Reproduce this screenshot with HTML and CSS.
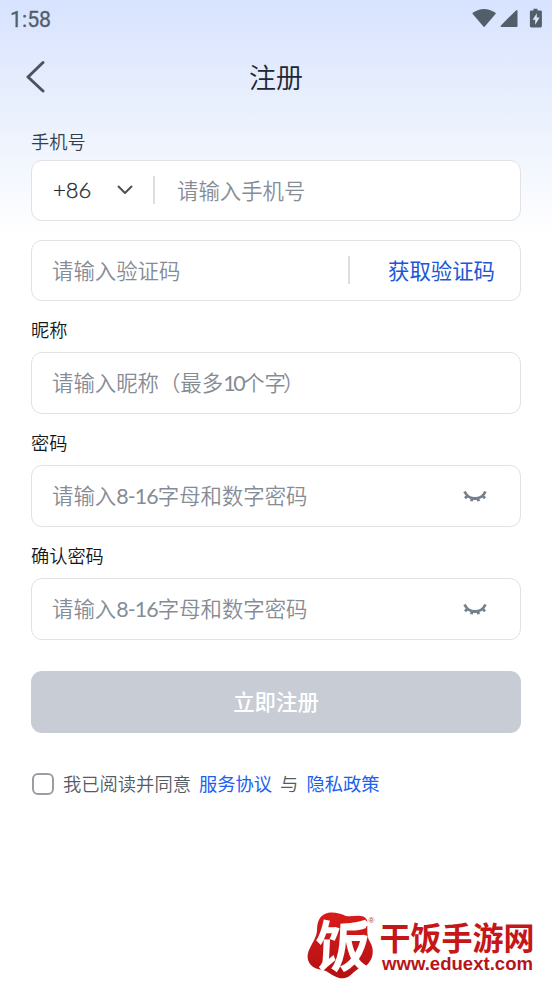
FILE: index.html
```html
<!DOCTYPE html>
<html lang="zh-CN">
<head>
<meta charset="utf-8">
<title>注册</title>
<link rel="stylesheet" href="styles.css">
</head>
<body>
<div class="screen">
  <div class="status">
    <span class="clock">1:58</span>
    <svg class="status-icons" width="72" height="22" viewBox="0 0 72 22">
      <path d="M.7 4.800Q12.100-2.800 23.500 4.800Q24 5.400 23.500 6L12.800 18.600Q12.100 19.300 11.400 18.600L.7 6Q.3 5.300.7 4.800Z"/>
      <path d="M45.500 2.800V18a1 1 0 0 1-1 1H29.400q-1.400-.4-.5-1.600L44 2.400q1.500-1 1.500.4Z"/>
      <path fill-rule="evenodd" d="M61.500.8h4v1.800h3a1.400 1.400 0 0 1 1.400 1.400v14a1.400 1.400 0 0 1-1.400 1.400h-9.200a1.400 1.400 0 0 1-1.400-1.400V4a1.400 1.400 0 0 1 1.400-1.400h2.200ZM64.800 5.200l-4.200 6.600h2.600v5l4.400-7.200h-2.800Z"/>
    </svg>
  </div>
  <header class="header">
    <svg class="back" width="20" height="34" viewBox="0 0 20 34"><path d="M17 2.500 2 17 17 31"/></svg>
    <h1 class="title">注册</h1>
  </header>
  <main class="form">
    <label class="label label-phone">手机号</label>
    <div class="field field-short">
      <span class="code">+86</span>
      <svg class="chevron" width="16" height="10" viewBox="0 0 16 10"><path d="M1.500 1.500 8 8 14.500 1.500"/></svg>
      <i class="divider divider-phone"></i>
      <span class="hint">请输入手机号</span>
    </div>
    <div class="field field-short field-sms">
      <span class="hint">请输入验证码</span>
      <i class="divider divider-sms"></i>
      <span class="send">获取验证码</span>
    </div>
    <label class="label">昵称</label>
    <div class="field"><span class="hint">请输入昵称（最多<span class="num num-tight">10</span>个字<span class="paren">）</span></span></div>
    <label class="label">密码</label>
    <div class="field">
      <span class="hint">请输入<span class="num">8-16</span>字母和数字密码</span>
      <svg class="eye" width="24" height="14" viewBox="0 0 24 14"><path d="M1.500 1.500C6 10.800 18 10.800 22.500 1.500M4.500 5.800 2 8.200M9 8.700 8.400 11.300M15 8.700 15.600 11.300M19.500 5.800 22 8.200"/></svg>
    </div>
    <label class="label">确认密码</label>
    <div class="field">
      <span class="hint">请输入<span class="num">8-16</span>字母和数字密码</span>
      <svg class="eye" width="24" height="14" viewBox="0 0 24 14"><path d="M1.500 1.500C6 10.800 18 10.800 22.500 1.500M4.500 5.800 2 8.200M9 8.700 8.400 11.300M15 8.700 15.600 11.300M19.500 5.800 22 8.200"/></svg>
    </div>
    <button class="submit">立即注册</button>
    <div class="agree">
      <i class="checkbox"></i>
      <span class="agree-text">我已阅读并同意</span>
      <a class="link">服务协议</a>
      <span>与</span>
      <a class="link">隐私政策</a>
    </div>
  </main>
  <svg class="brand" width="232" height="72" viewBox="0 0 232 72">
    <defs><linearGradient id="red" x1="0" y1="0" x2="0" y2="1"><stop offset="0" stop-color="#d91c1b"/><stop offset="1" stop-color="#b41014"/></linearGradient></defs>
    <path fill="url(#red)" d="M14 8C20 0 31 2 40 6C48 7 57 3 61 10C62 19 60 25 64 32C69 40 67 50 60 56C52 57 49 62 42 67C33 71 27 65 20 61C13 59 5 59 2 50C0 42 6 35 9 28C13 20 9 16 14 8Z"/>
    <text class="mark" transform="translate(8 57) skewX(-3)" x="0" y="0" textLength="56" lengthAdjust="spacingAndGlyphs">饭</text>
    <path fill="#fff" d="M36 15C45 18 54 15 61 11L60 18C53 21 45 21 37 20ZM49 47C55 53 61 57 72 62L59 61C52 58 48 54 45 50Z"/>
    <text class="reg" x="62.500" y="13">®</text>
    <text class="brand-name" x="73.500" y="40" textLength="155" lengthAdjust="spacingAndGlyphs">干饭手游网</text>
    <text class="brand-url" x="76" y="60" textLength="151" lengthAdjust="spacingAndGlyphs">www.eduext.com</text>
  </svg>
</div>
</body>
</html>
```
FILE: styles.css
```css
* { box-sizing: border-box; }
body { margin: 0; font-family: "Noto Sans CJK SC", sans-serif; font-weight: 350; color: #111820; }
.screen { height: 983px; overflow: hidden; display: flex; flex-direction: column; background: linear-gradient(#d7e2fe 0, #e8effd 100px, #fff 240px); }
.status { height: 38px; flex: none; display: flex; justify-content: space-between; align-items: flex-start; padding: 8px 8px 0 10px; }
.clock { font: 400 21.300px/24px Roboto, sans-serif; color: #535e6b; -webkit-text-stroke: .3px #535e6b; }
.status-icons { fill: #535e6b; }
.header { height: 78px; flex: none; display: grid; grid-template-columns: 20px 1fr 20px; align-items: center; padding: 0 26px; }
.back { fill: none; stroke: #4c535e; stroke-width: 3; stroke-linecap: round; stroke-linejoin: round; }
.title { margin: 0; text-align: center; font-size: 27px; line-height: 40px; font-weight: 350; color: #202733; }
.form { padding: 12px 31px 0; display: flex; flex-direction: column; }
.label { height: 51px; font-size: 18.200px; line-height: 27px; padding-top: 15px; }
.label-phone { height: 32px; padding-top: 0; color: #363e4b; }
.field { height: 62px; padding: 0 20px 1px; border: 1.500px solid #e2e2e5; border-radius: 11px; background: #fff; display: flex; align-items: center; font-size: 21.400px; line-height: 32px; }
.field-short { height: 61px; }
.field-sms { margin-top: 19px; }
.hint { color: #858c95; white-space: nowrap; margin-top: -1px; }
.num { font-family: Lato, sans-serif; font-weight: 400; letter-spacing: -.9px; }
.num-tight { letter-spacing: -2.400px; }
.paren { margin-left: -3px; }
.code { width: 65px; padding-left: 1px; font: 300 22px/32px Lato, sans-serif; -webkit-text-stroke: .3px #252a31; color: #252a31; }
.chevron, .eye, .checkbox { flex: none; }
.chevron { fill: none; stroke: #4b5158; stroke-width: 2; stroke-linecap: round; stroke-linejoin: round; }
.divider { width: 2px; height: 28px; background: #dedede; flex: none; }
.divider-phone { margin: 0 22px 0 20px; }
.divider-sms { margin-left: auto; }
.send { margin: -1px 5px 0 38px; color: #1c57d5; font-weight: 400; }
.eye { margin: 3px 13px 0 auto; fill: none; stroke: #74818c; stroke-width: 2.800; }
.submit { height: 62px; margin-top: 31px; border: 0; padding: 0 0 2px; border-radius: 11px; background: #c8ccd4; color: #fff; font: 500 21.400px/32px "Noto Sans CJK SC", sans-serif; }
.agree { margin-top: 36px; height: 28px; display: flex; align-items: center; font-size: 18.300px; color: #535b65; white-space: nowrap; }
.checkbox { width: 22px; height: 22px; margin: 1px 9px 0 1px; border: 2px solid #9a9da3; border-radius: 6px; background: #fff; }
.agree-text { margin-right: 8px; }
.link { color: #1c60ec; font-weight: 400; }
.link + span { margin: 0 8px; }
.brand { flex: none; margin: auto 14px 1px auto; overflow: visible; }
.mark { font: 700 56px "Noto Sans CJK SC", sans-serif; fill: #fff; }
.reg { font: 8px "Liberation Sans", sans-serif; fill: #b33; }
.brand-name { font: 700 32px "Noto Sans CJK SC", sans-serif; fill: #c51619; }
.brand-url { font: 700 18px "Liberation Sans", sans-serif; fill: #b81418; }
```
